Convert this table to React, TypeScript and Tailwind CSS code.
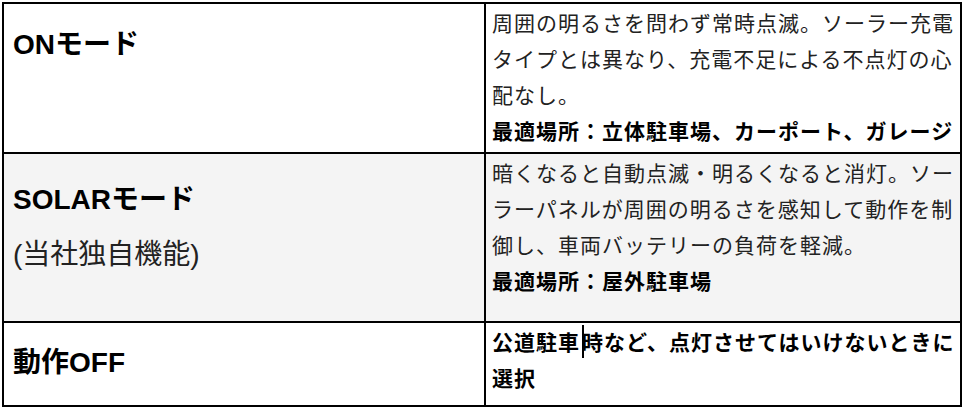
const latin = { fontFamily: '"Liberation Sans", "Noto Sans CJK JP", sans-serif' }
const jp = { fontFamily: '"Noto Sans CJK JP", "Liberation Sans", sans-serif' }

function Caret() {
  return <span className="inline-block w-0 h-[33px] ml-[2px] -mr-[2px] border-l-[2px] border-black align-[-8px]" />
}

export default function App() {
  return (
    <div className="p-[2px] bg-white" style={latin}>
      <div className="grid grid-cols-[480px_474px] grid-rows-[148px_167px_82px] gap-[2px] p-[2px] bg-black w-[960px]">
        {/* ON */}
        <div className="bg-white pl-[9px] pt-[21px]">
          <h3 className="text-[28px] leading-[40px] font-bold text-black">ONモード</h3>
        </div>
        <div className="bg-white pl-[6px] pr-[4px] text-[21px] tracking-[1px] leading-[36px] text-[#222]" style={jp}>
          <p>周囲の明るさを問わず常時点滅。ソーラー充電タイプとは異なり、充電不足による不点灯の心配なし。</p>
          <p className="font-bold text-black">最適場所：立体駐車場、カーポート、ガレージ</p>
        </div>

        {/* SOLAR */}
        <div className="bg-[#f4f4f4] pl-[9px] pt-[26px]">
          <h3 className="text-[28px] leading-[40px] font-bold text-black">SOLARモード</h3>
          <p className="mt-[15px] text-[28px] leading-[40px] text-[#222]">(当社独自機能)</p>
        </div>
        <div className="bg-[#f4f4f4] pl-[6px] pr-[4px] text-[21px] tracking-[1px] leading-[36px] text-[#222]" style={jp}>
          <p>暗くなると自動点滅・明るくなると消灯。ソーラーパネルが周囲の明るさを感知して動作を制御し、車両バッテリーの負荷を軽減。</p>
          <p className="font-bold text-black">最適場所：屋外駐車場</p>
        </div>

        {/* OFF */}
        <div className="bg-white pl-[9px] pt-[20px]">
          <h3 className="text-[28px] leading-[40px] font-bold text-black">動作OFF</h3>
        </div>
        <div className="bg-white pl-[6px] pr-[4px] text-[21px] tracking-[1px] leading-[36px]" style={jp}>
          <p className="font-bold text-black">
            公道駐車<Caret />時など、点灯させてはいけないときに選択
          </p>
        </div>
      </div>
    </div>
  )
}
